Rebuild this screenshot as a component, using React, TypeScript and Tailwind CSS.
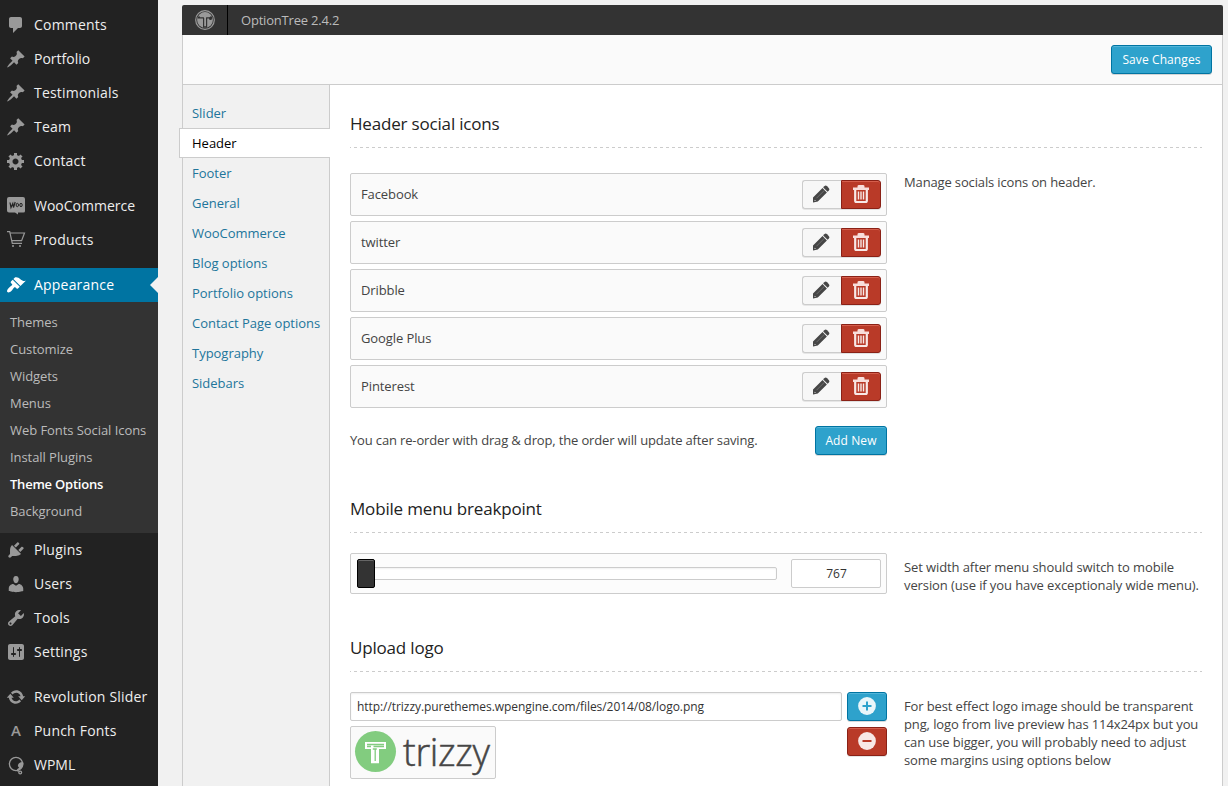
import React from "react";

const icons: Record<string, string> = {
  comments: "M5 2h9c1.1 0 2 .9 2 2v7c0 1.1-.9 2-2 2h-2l-5 5v-5H5c-1.1 0-2-.9-2-2V4c0-1.1.9-2 2-2z",
  pin: "M10.44 3.02l1.82-1.82 6.36 6.35-1.83 1.82c-1.05-.68-2.48-.57-3.41.36l-.75.75c-.92.93-1.04 2.35-.35 3.41l-1.83 1.82-2.41-2.41-2.8 2.79c-.42.42-3.38 2.71-3.8 2.29s1.86-3.39 2.28-3.81l2.79-2.79L4.1 9.36l1.83-1.82c1.05.69 2.48.57 3.4-.36l.75-.75c.93-.92 1.05-2.35.36-3.41z",
  gear: "M18 12h-2.18c-.17.7-.44 1.35-.81 1.93l1.54 1.54-2.1 2.1-1.54-1.54c-.58.36-1.23.63-1.91.79V19H8v-2.18c-.68-.16-1.33-.43-1.91-.79l-1.54 1.54-2.12-2.12 1.54-1.54c-.36-.58-.63-1.23-.79-1.91H1V9.03h2.17c.16-.7.44-1.35.8-1.94L2.43 5.55l2.1-2.1 1.54 1.54c.58-.37 1.24-.64 1.93-.81V2h3v2.18c.68.16 1.33.43 1.91.79l1.54-1.54 2.12 2.12-1.54 1.54c.36.59.64 1.24.8 1.94H18V12zm-8.5 1.5c1.66 0 3-1.34 3-3s-1.34-3-3-3-3 1.34-3 3 1.34 3 3 3z",
  brush: "M14.48 11.06L7.41 3.99l1.5-1.5c.5-.56 2.3-.47 3.51.32 1.21.8 1.43 1.28 2.91 2.1 1.18.64 2.45 1.26 4.45.85zm-.71.71L6.7 4.7 4.93 6.47c-.39.39-.39 1.02 0 1.41l1.06 1.06c.39.39.39 1.03 0 1.42-.6.6-1.43 1.11-2.21 1.69-.35.26-.7.53-1.01.84C1.43 14.23.4 16.08 1.4 17.07c.99 1 2.84-.03 4.18-1.36.31-.31.58-.66.85-1.02.57-.78 1.08-1.61 1.69-2.21.39-.39 1.02-.39 1.41 0l1.06 1.06c.39.39 1.02.39 1.41 0z",
  plug: "M13.11 4.36L9.87 7.6 8 5.73l3.24-3.24c.35-.34 1.05-.2 1.56.32.52.51.66 1.21.31 1.55zm-8 1.77l.91-1.12 9.01 9.01-1.19.84c-.71.71-2.63 1.16-3.82 1.16H6.14L4.9 17.26c-.59.59-1.54.59-2.12 0-.59-.58-.59-1.53 0-2.12l1.24-1.24v-3.88c0-1.13.4-3.19 1.09-3.89zm7.26 3.97l3.24-3.24c.34-.35 1.04-.21 1.55.31.52.51.66 1.21.31 1.55l-3.24 3.25z",
  user: "M10 9.25c-2.27 0-2.73-3.44-2.73-3.44C7 4.02 7.82 2 9.97 2c2.16 0 2.98 2.02 2.71 3.81 0 0-.41 3.44-2.68 3.44zm0 2.57L12.72 10c2.39 0 4.52 2.33 4.52 4.53v2.49s-3.65 1.13-7.24 1.13c-3.65 0-7.24-1.13-7.24-1.13v-2.49c0-2.25 1.94-4.48 4.47-4.48z",
  wrench: "M16.68 9.77c-1.34 1.34-3.3 1.67-4.95.99l-5.41 6.52c-.99.99-2.59.99-3.58 0s-.99-2.59 0-3.57l6.52-5.42c-.68-1.65-.35-3.61.99-4.95 1.28-1.28 3.12-1.62 4.72-1.06l-2.89 2.89 2.82 2.82 2.86-2.87c.53 1.58.18 3.39-1.08 4.65zM3.81 16.21c.4.39 1.04.39 1.43 0 .4-.4.4-1.04 0-1.43-.39-.4-1.03-.4-1.43 0-.39.39-.39 1.03 0 1.43z",
  sliders: "M18 16V4c0-1.1-.9-2-2-2H4c-1.1 0-2 .9-2 2v12c0 1.1.9 2 2 2h12c1.1 0 2-.9 2-2zM8 11h1c.55 0 1 .45 1 1s-.45 1-1 1H8v1.5c0 .28-.22.5-.5.5s-.5-.22-.5-.5V13H6c-.55 0-1-.45-1-1s.45-1 1-1h1V5.5c0-.28.22-.5.5-.5s.5.22.5.5V11zm5-2h-1c-.55 0-1-.45-1-1s.45-1 1-1h1V5.5c0-.28.22-.5.5-.5s.5.22.5.5V7h1c.55 0 1 .45 1 1s-.45 1-1 1h-1v5.5c0 .28-.22.5-.5.5s-.5-.22-.5-.5V9z",
  update: "M10.2 3.28c3.53 0 6.43 2.61 6.92 6h2.08l-3.5 4-3.5-4h2.32c-.45-1.97-2.21-3.45-4.32-3.45-1.45 0-2.73.71-3.54 1.78L4.95 5.66C6.23 4.2 8.11 3.28 10.2 3.28zm-.4 13.44c-3.52 0-6.43-2.61-6.92-6H.8l3.5-4c1.17 1.33 2.33 2.67 3.5 4H5.48c.45 1.97 2.21 3.45 4.32 3.45 1.45 0 2.73-.71 3.54-1.78l1.71 1.95c-1.28 1.46-3.15 2.38-5.25 2.38z",
};

function MenuIcon({ name }: { name: string }) {
  if (name === "woo")
    return (
      <svg viewBox="0 0 20 20" className="h-5 w-5 overflow-visible">
        <path fill="#999" d="M3 1h14a2 2 0 0 1 2 2v12a1.500 1.500 0 0 1-1.500 1.500H12V18.500L9 16.500H3a2 2 0 0 1-2-2V3a2 2 0 0 1 2-2z" />
        <path fill="none" stroke="#222" strokeWidth="1.200" d="M4 6.500l1 5 1.800-4 .7 4 1.700-5.500" />
        <ellipse cx="11.300" cy="9" rx="1.200" ry="1.700" fill="none" stroke="#222" />
        <ellipse cx="15" cy="9" rx="1.200" ry="1.700" fill="none" stroke="#222" />
      </svg>
    );
  if (name === "cart")
    return (
      <svg viewBox="0 0 20 20" className="h-5 w-5" fill="none" stroke="#999" strokeWidth="1.200">
        <path d="M1 1.700h2.700l2.600 11.700H16M4.200 3h14.300l-2.900 7.700H5.700" />
        <circle cx="7" cy="16" r="1" fill="#999" stroke="none" />
        <circle cx="14" cy="16" r="1" fill="#999" stroke="none" />
      </svg>
    );
  if (name === "letter")
    return <span className="w-5 text-center text-[15px] font-semibold text-[#999]">A</span>;
  if (name === "wpml")
    return (
      <svg viewBox="0 0 20 20" className="h-5 w-5 overflow-visible" fill="none" stroke="#999" strokeWidth="1.300">
        <circle cx="10" cy="9" r="6.600" />
        <path d="M16.700 7.500c.3 3.500-1.600 5.500-3.600 6.200-2 .8-1.800 2.300-.3 2.300" strokeWidth="1.600" />
        <path d="M16.500 7c-2.500 0-4.500 1.500-4.700 4l1.800 2.500c2-.8 3.200-3 2.900-6.500z" fill="#999" stroke="none" />
        <circle cx="14.200" cy="17.500" r="1.400" />
      </svg>
    );
  return (
    <svg viewBox="0 0 20 20" className="h-5 w-5" fill={name === "brush" ? "#fff" : "#999"}>
      <path d={icons[name]} />
    </svg>
  );
}

function MenuItem({ icon, label, active }: { icon: string; label: string; active?: boolean }) {
  const natural = label === "WooCommerce" || label === "Portfolio" || label === "WPML";
  return (
    <div
      className={
        "relative flex h-[34px] items-center gap-2 pl-1.5 text-sm whitespace-nowrap " +
        (active ? "bg-[#0074a2] text-white" : "text-[#eee]")
      }
    >
      <MenuIcon name={icon} />
      <span className={natural ? "" : "tracking-[0.2px]"}>{label}</span>
      {active && (
        <span className="absolute top-[9px] right-0 border-y-8 border-r-8 border-y-transparent border-r-[#f1f1f1]" />
      )}
    </div>
  );
}

const submenu = ["Themes", "Customize", "Widgets", "Menus", "Web Fonts Social Icons", "Install Plugins", "Theme Options", "Background"];

function Sidebar() {
  return (
    <aside className="h-[786px] w-[158px] shrink-0 bg-[#222] pt-2">
      <MenuItem icon="comments" label="Comments" />
      <MenuItem icon="pin" label="Portfolio" />
      <MenuItem icon="pin" label="Testimonials" />
      <MenuItem icon="pin" label="Team" />
      <MenuItem icon="gear" label="Contact" />
      <div className="h-[11px]" />
      <MenuItem icon="woo" label="WooCommerce" />
      <MenuItem icon="cart" label="Products" />
      <div className="h-[11px]" />
      <MenuItem icon="brush" label="Appearance" active />
      <ul className="h-[231px] bg-[#333] pt-[7px] pl-2.5 text-[13px] leading-[27px] tracking-[-0.06px] whitespace-nowrap text-[#bbb]">
        {submenu.map((s) => (
          <li key={s} className={s === "Theme Options" ? "font-semibold tracking-[-0.22px] text-white" : ""}>
            {s}
          </li>
        ))}
      </ul>
      <MenuItem icon="plug" label="Plugins" />
      <MenuItem icon="user" label="Users" />
      <MenuItem icon="wrench" label="Tools" />
      <MenuItem icon="sliders" label="Settings" />
      <div className="h-[11px]" />
      <MenuItem icon="update" label="Revolution Slider" />
      <MenuItem icon="letter" label="Punch Fonts" />
      <MenuItem icon="wpml" label="WPML" />
    </aside>
  );
}

const tabs = ["Slider", "Header", "Footer", "General", "WooCommerce", "Blog options", "Portfolio options", "Contact Page options", "Typography", "Sidebars"];

function Tabs() {
  return (
    <nav className="w-[147px] shrink-0 border-r border-[#ccc] bg-[#f1f1f1] pt-[13px]">
      {tabs.map((t) =>
        t === "Header" ? (
          <div key={t} className="relative -mr-px -ml-1 h-[30px] border-y border-l border-[#ccc] bg-white pl-3 leading-7 text-black">
            {t}
          </div>
        ) : (
          <div key={t} className="h-[30px] pl-[9px] leading-[30px] tracking-[-0.02px] whitespace-nowrap text-[#21759b]">
            {t}
          </div>
        ),
      )}
    </nav>
  );
}

function Heading({ children }: { children: React.ReactNode }) {
  return (
    <div className="h-[34px]">
      <h3 className="h-[33px] text-[17px] leading-5 tracking-[-0.18px] text-[#222]">{children}</h3>
      <div className="h-px w-[852px] bg-[repeating-linear-gradient(90deg,#ccc_0,#ccc_1px,transparent_1px,transparent_4px,#ccc_4px,#ccc_6px)]" />
    </div>
  );
}

const blueButton =
  "flex items-center justify-center rounded-[3px] border border-[#0074a2] bg-[#2ea2cc] text-xs tracking-[0.1px] text-white shadow-[inset_0_1px_0_rgba(120,200,230,0.5),0_1px_0_rgba(0,0,0,0.15)]";
const redButton =
  "flex items-center justify-center border border-[#8a2116] bg-[#b93a28] shadow-[inset_0_1px_0_rgba(255,150,130,0.4),0_1px_0_rgba(0,0,0,0.1)]";

function SocialRow({ name }: { name: string }) {
  return (
    <div className="flex h-[43px] items-center justify-between rounded-[2px] border border-[#ccc] bg-[#fafafa] pr-[5px] pl-2.5">
      <span className="tracking-[-0.1px]">{name}</span>
      <div className="flex">
        <div className="flex h-[29px] w-[39px] items-center rounded-l-[3px] border border-r-0 border-[#ccc] bg-[#f7f7f7] pb-px pl-[9px] shadow-[0_1px_0_rgba(0,0,0,0.08)]">
          <svg viewBox="0 0 18 18" className="h-[18px] w-[18px]" fill="#464646">
            <path d="M12.300 1.300a2 2 0 0 1 2.800 0l1.600 1.600a2 2 0 0 1 0 2.800l-1.100 1.100-4.400-4.400z" />
            <path d="M10.500 3.100l4.400 4.400L5.800 16.600 1 17.400V12.600zM2.600 14.800v1.200l1.400-.2z" fillRule="evenodd" />
            <path d="M4.500 13.200l8-8" stroke="#8a8a8a" strokeWidth=".6" />
          </svg>
        </div>
        <div className={redButton + " h-[29px] w-10 rounded-r-[3px] pb-px"}>
          <svg viewBox="0 0 16 18" className="h-[18px] w-4">
            <path d="M0 2.500h4.500V1.300Q4.500 0 6 0h4q1.500 0 1.500 1.300v1.200H16v2.500H0z" fill="#f8dedb" />
            <path d="M2.200 5v11q0 1 1 1h9.600q1 0 1-1V5" fill="none" stroke="#f8e8e6" strokeWidth="2.200" />
            <path d="M5.500 6.500v8M8 6.500v8M10.500 6.500v8" stroke="#f8e8e6" strokeWidth="1.400" />
          </svg>
        </div>
      </div>
    </div>
  );
}

function CircleSign({ plus }: { plus?: boolean }) {
  return (
    <svg viewBox="0 0 18 18" className="mr-px mb-px h-[18px] w-[18px]">
      <circle cx="9" cy="9" r="8.900" fill={plus ? "#eaf6fa" : "#f8e8e6"} />
      <path d={plus ? "M4.500 9h9M9 4.500v9" : "M4.500 9h9"} stroke={plus ? "#2ea2cc" : "#b93a28"} strokeWidth="2" />
    </svg>
  );
}

function Content() {
  return (
    <section className="flex-1 pt-[29px] pr-[18px] pl-5">
      <Heading>Header social icons</Heading>
      <div className="mt-[25px] flex gap-[17px]">
        <div className="flex w-[537px] flex-col gap-[5px]">
          {["Facebook", "twitter", "Dribble", "Google Plus", "Pinterest"].map((n) => (
            <SocialRow key={n} name={n} />
          ))}
          <div className="mt-[13px] flex h-[29px] items-center justify-between">
            <span className="tracking-[-0.15px]">You can re-order with drag &amp; drop, the order will update after saving.</span>
            <button className={blueButton + " h-[29px] w-[72px]"}>Add New</button>
          </div>
        </div>
        <p className="leading-[18px] tracking-[-0.14px]">Manage socials icons on header.</p>
      </div>

      <div className="mt-11">
        <Heading>Mobile menu breakpoint</Heading>
      </div>
      <div className="mt-5 flex gap-[17px]">
        <div className="flex h-[41px] w-[537px] items-center justify-between rounded-[2px] border border-[#ccc] bg-[#fcfcfc] px-[5px]">
          <div className="relative ml-2 h-[13px] w-[413px] rounded-[2px] border border-[#ccc] bg-white shadow-[inset_0_1px_2px_rgba(0,0,0,0.06)]">
            <span className="absolute -top-[9px] -left-2 h-[29px] w-[18px] rounded-[2px] border border-black bg-[#333] shadow-[inset_0_1px_0_#666]" />
          </div>
          <div className="flex h-[29px] w-[90px] items-center justify-center rounded-[2px] border border-[#ccc] bg-white pl-px text-xs text-[#333]">767</div>
        </div>
        <p className="flex-1 pt-[5px] leading-[18px] tracking-[-0.1px] whitespace-nowrap">
          Set width after menu should switch to mobile
          <br />
          version (use if you have exceptionaly wide menu).
        </p>
      </div>

      <div className="mt-11">
        <Heading>Upload logo</Heading>
      </div>
      <div className="mt-5 flex gap-[17px]">
        <div className="w-[537px]">
          <div className="flex justify-between">
            <div className="flex h-[29px] w-[492px] items-center rounded-[2px] border border-[#ccc] bg-white pl-1.5 text-xs tracking-[-0.06px] text-[#333] shadow-[inset_0_1px_2px_rgba(0,0,0,0.07)]">
              http://trizzy.purethemes.wpengine.com/files/2014/08/logo.png
            </div>
            <button className={blueButton + " h-[29px] w-10"}>
              <CircleSign plus />
            </button>
          </div>
          <div className="mt-[5px] flex items-start justify-between">
            <div className="flex h-[53px] w-[146px] items-center rounded-[2px] border border-[#ccc] bg-[#fafafa] pl-1">
              <svg viewBox="0 0 140 51" className="h-[51px] w-[140px] shrink-0 overflow-visible">
                <circle cx="20.500" cy="24.500" r="20.500" fill="#82cc7f" />
                <path d="M10 15h21v7h-7v14.300h-8V22h-6z" fill="#fff" />
                <path d="M12 17.500h17M12 19.500h4M18.500 19.500h10.500M20.200 22v12M17.800 22h4" fill="none" stroke="#82cc7f" strokeWidth="1.300" />
                <text x="48" y="38.500" fontFamily="Open Sans" fontWeight="300" fontSize="38" textLength="87" fill="#464646" stroke="#464646" strokeWidth=".5">
                  trizzy
                </text>
              </svg>
            </div>
            <button className={redButton + " mt-px h-[29px] w-10 rounded-[3px]"}>
              <CircleSign />
            </button>
          </div>
        </div>
        <p className="flex-1 pt-[5px] leading-[18px] tracking-[-0.12px] whitespace-nowrap">
          For best effect logo image should be transparent
          <br />
          png, logo from live preview has 114x24px but you
          <br />
          can use bigger, you will probably need to adjust
          <br />
          some margins using options below
        </p>
      </div>
    </section>
  );
}

export default function App() {
  return (
    <div className="flex h-[786px] w-[1228px] overflow-hidden bg-[#f1f1f1] font-['Open_Sans',sans-serif] text-[13px] text-[#444]">
      <Sidebar />
      <main className="ml-6 flex w-[1041px] flex-col pt-[5px]">
        <header className="flex h-[30px] shrink-0 items-center rounded-t-[2px] bg-[#333] text-[#bbb]">
          <div className="flex h-[30px] w-[46px] items-center justify-center border-r border-black">
            <svg viewBox="0 0 20 20" className="h-5 w-5">
              <circle cx="10" cy="10" r="9.300" fill="none" stroke="#999" strokeWidth="1.200" />
              <circle cx="10" cy="10" r="7.900" fill="#999" />
              <path d="M3 6.600h14v1.800H3zM8 8h4.200v9.700H8z" fill="#333" />
              <path d="M5 5.500h10v1.800h-3.800l-.2 1v8H9.200V8.300l-.4-1H5z" fill="#999" />
              <circle cx="15.500" cy="8.500" r="1.500" fill="#333" />
            </svg>
          </div>
          <span className="pt-px pl-[13px] tracking-[-0.2px]">OptionTree 2.4.2</span>
        </header>
        <div className="flex flex-1 flex-col border-x border-[#ccc] bg-white">
          <div className="flex h-[50px] shrink-0 items-center justify-end border-b border-[#ccc] bg-[#fafafa] pr-2.5">
            <button className={blueButton + " h-[29px] w-[101px]"}>Save Changes</button>
          </div>
          <div className="flex flex-1">
            <Tabs />
            <Content />
          </div>
        </div>
      </main>
    </div>
  );
}
